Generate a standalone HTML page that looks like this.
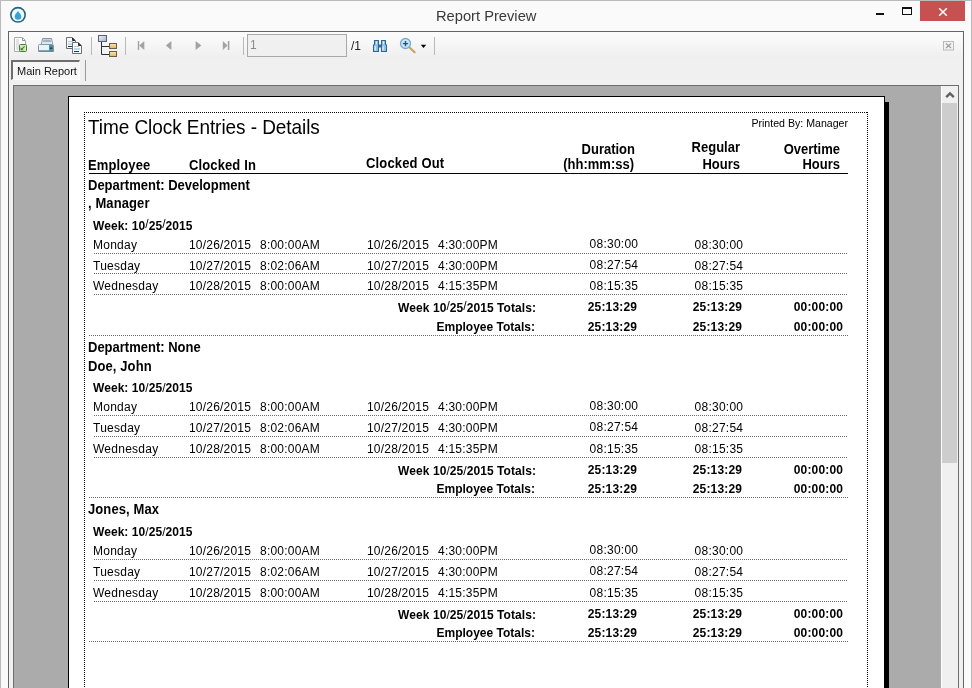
<!DOCTYPE html>
<html><head><meta charset="utf-8"><style>
html,body{margin:0;padding:0;}
body{width:972px;height:688px;overflow:hidden;position:relative;-webkit-font-smoothing:antialiased;background:#fafafa;font-family:"Liberation Sans",sans-serif;}
.t{position:absolute;white-space:pre;line-height:1;}
#frame{position:absolute;left:0;top:0;width:972px;height:688px;box-sizing:border-box;border:1px solid #bababa;border-bottom:none;}
#panel{position:absolute;left:8px;top:31px;width:956px;height:700px;box-sizing:border-box;border:1px solid #646464;background:#f0f0f0;}
#tb{position:absolute;left:9px;top:32px;width:954px;height:27px;background:linear-gradient(#fcfcfc,#f7f7f7 40%,#eeeeee);}
#view{position:absolute;left:13px;top:85px;width:946px;height:700px;box-sizing:border-box;border:1px solid #6e6e6e;border-right:1px solid #6e6e6e;background:#ababab;overflow:hidden;}
</style></head><body>
<div id="root" style="position:absolute;left:0;top:0;width:972px;height:688px;overflow:hidden;will-change:transform;">
<div id="frame"></div>
<div id="panel"></div>
<div id="tb"></div>
<div id="view"></div>
<div id="report">
<div style="position:absolute;left:68px;top:96px;width:817px;height:600px;background:#fff;border:1px solid #000;box-sizing:border-box;"></div>
<div style="position:absolute;left:885px;top:102px;width:4px;height:600px;background:#000;"></div>
<div style="position:absolute;left:84px;top:112px;width:784px;height:1px;background:repeating-linear-gradient(90deg,#000 0 1px,transparent 1px 2px);"></div>
<div style="position:absolute;left:84px;top:112px;width:1px;height:600px;background:repeating-linear-gradient(180deg,#000 0 1px,transparent 1px 2px);"></div>
<div style="position:absolute;left:867px;top:112px;width:1px;height:600px;background:repeating-linear-gradient(180deg,#000 0 1px,transparent 1px 2px);"></div>
<div class="t" style="left:88px;top:118px;font-size:19px;color:#000;transform:scaleY(1.06);transform-origin:0 16px;letter-spacing:-0.07px;">Time Clock Entries - Details</div>
<div class="t" style="right:124px;top:118px;font-size:10.6px;color:#000;text-align:right;">Printed By: Manager</div>
<div class="t" style="left:88px;top:159px;font-size:13px;font-weight:bold;color:#000;transform:scaleY(1.08);transform-origin:0 11px;letter-spacing:0.12px;">Employee</div>
<div class="t" style="left:189px;top:159px;font-size:13px;font-weight:bold;color:#000;transform:scaleY(1.08);transform-origin:0 11px;letter-spacing:0.12px;">Clocked In</div>
<div class="t" style="left:366px;top:157px;font-size:13px;font-weight:bold;color:#000;transform:scaleY(1.08);transform-origin:0 11px;letter-spacing:0.15px;">Clocked Out</div>
<div class="t" style="right:337px;top:143px;font-size:13px;font-weight:bold;color:#000;text-align:right;transform:scaleY(1.08);transform-origin:0 11px;">Duration</div>
<div class="t" style="right:338px;top:158px;font-size:13px;font-weight:bold;color:#000;text-align:right;transform:scaleY(1.08);transform-origin:0 11px;">(hh:mm:ss)</div>
<div class="t" style="right:232px;top:141px;font-size:13px;font-weight:bold;color:#000;text-align:right;transform:scaleY(1.08);transform-origin:0 11px;">Regular</div>
<div class="t" style="right:232px;top:158px;font-size:13px;font-weight:bold;color:#000;text-align:right;transform:scaleY(1.08);transform-origin:0 11px;">Hours</div>
<div class="t" style="right:132px;top:143px;font-size:13px;font-weight:bold;color:#000;text-align:right;transform:scaleY(1.08);transform-origin:0 11px;">Overtime</div>
<div class="t" style="right:132px;top:158px;font-size:13px;font-weight:bold;color:#000;text-align:right;transform:scaleY(1.08);transform-origin:0 11px;">Hours</div>
<div style="position:absolute;left:89px;top:173px;width:759px;height:1px;background:#000;"></div>
<div class="t" style="left:88px;top:179px;font-size:13px;font-weight:bold;color:#000;transform:scaleY(1.08);transform-origin:0 11px;">Department: Development</div>
<div class="t" style="left:88px;top:197px;font-size:13px;font-weight:bold;color:#000;transform:scaleY(1.08);transform-origin:0 11px;letter-spacing:0.1px;">, Manager</div>
<div class="t" style="left:93px;top:220px;font-size:12px;font-weight:bold;color:#000;letter-spacing:0.06px;">Week: 10<span style="font-weight:normal;position:relative;top:-2px">/</span>25<span style="font-weight:normal;position:relative;top:-2px">/</span>2015</div>
<div class="t" style="left:93px;top:239px;font-size:12px;color:#000;letter-spacing:0.25px;">Monday</div>
<div class="t" style="left:189px;top:239px;font-size:12px;color:#000;letter-spacing:0.2px;">10/26/2015</div>
<div class="t" style="left:260px;top:239px;font-size:12px;color:#000;letter-spacing:0.22px;">8:00:00AM</div>
<div class="t" style="left:367px;top:239px;font-size:12px;color:#000;letter-spacing:0.2px;">10/26/2015</div>
<div class="t" style="left:438px;top:239px;font-size:12px;color:#000;letter-spacing:0.22px;">4:30:00PM</div>
<div class="t" style="right:334px;top:238px;font-size:12px;color:#000;text-align:right;letter-spacing:0.25px;margin-right:-0.25px;">08:30:00</div>
<div class="t" style="right:229px;top:239px;font-size:12px;color:#000;text-align:right;letter-spacing:0.25px;margin-right:-0.25px;">08:30:00</div>
<div style="position:absolute;left:94px;top:253px;width:754px;height:1px;background:repeating-linear-gradient(90deg,#6a6a6a 0 1px,transparent 1px 2px);"></div>
<div class="t" style="left:93px;top:260px;font-size:12px;color:#000;letter-spacing:0.25px;">Tuesday</div>
<div class="t" style="left:189px;top:260px;font-size:12px;color:#000;letter-spacing:0.2px;">10/27/2015</div>
<div class="t" style="left:260px;top:260px;font-size:12px;color:#000;letter-spacing:0.22px;">8:02:06AM</div>
<div class="t" style="left:367px;top:260px;font-size:12px;color:#000;letter-spacing:0.2px;">10/27/2015</div>
<div class="t" style="left:438px;top:260px;font-size:12px;color:#000;letter-spacing:0.22px;">4:30:00PM</div>
<div class="t" style="right:334px;top:259px;font-size:12px;color:#000;text-align:right;letter-spacing:0.25px;margin-right:-0.25px;">08:27:54</div>
<div class="t" style="right:229px;top:260px;font-size:12px;color:#000;text-align:right;letter-spacing:0.25px;margin-right:-0.25px;">08:27:54</div>
<div style="position:absolute;left:94px;top:273px;width:754px;height:1px;background:repeating-linear-gradient(90deg,#6a6a6a 0 1px,transparent 1px 2px);"></div>
<div class="t" style="left:93px;top:280px;font-size:12px;color:#000;letter-spacing:0.25px;">Wednesday</div>
<div class="t" style="left:189px;top:280px;font-size:12px;color:#000;letter-spacing:0.2px;">10/28/2015</div>
<div class="t" style="left:260px;top:280px;font-size:12px;color:#000;letter-spacing:0.22px;">8:00:00AM</div>
<div class="t" style="left:367px;top:280px;font-size:12px;color:#000;letter-spacing:0.2px;">10/28/2015</div>
<div class="t" style="left:438px;top:280px;font-size:12px;color:#000;letter-spacing:0.22px;">4:15:35PM</div>
<div class="t" style="right:334px;top:280px;font-size:12px;color:#000;text-align:right;letter-spacing:0.25px;margin-right:-0.25px;">08:15:35</div>
<div class="t" style="right:229px;top:280px;font-size:12px;color:#000;text-align:right;letter-spacing:0.25px;margin-right:-0.25px;">08:15:35</div>
<div style="position:absolute;left:94px;top:294px;width:754px;height:1px;background:repeating-linear-gradient(90deg,#6a6a6a 0 1px,transparent 1px 2px);"></div>
<div class="t" style="right:436px;top:302px;font-size:12px;font-weight:bold;color:#000;text-align:right;letter-spacing:0.07px;margin-right:-0.07px;">Week 10<span style="font-weight:normal;position:relative;top:-2px">/</span>25<span style="font-weight:normal;position:relative;top:-2px">/</span>2015 Totals:</div>
<div class="t" style="right:335px;top:301px;font-size:12px;font-weight:bold;color:#000;text-align:right;letter-spacing:0.17px;margin-right:-0.17px;">25:13:29</div>
<div class="t" style="right:230px;top:301px;font-size:12px;font-weight:bold;color:#000;text-align:right;letter-spacing:0.17px;margin-right:-0.17px;">25:13:29</div>
<div class="t" style="right:129px;top:301px;font-size:12px;font-weight:bold;color:#000;text-align:right;letter-spacing:0.17px;margin-right:-0.17px;">00:00:00</div>
<div class="t" style="right:437px;top:321px;font-size:12px;font-weight:bold;color:#000;text-align:right;">Employee Totals:</div>
<div class="t" style="right:335px;top:321px;font-size:12px;font-weight:bold;color:#000;text-align:right;letter-spacing:0.17px;margin-right:-0.17px;">25:13:29</div>
<div class="t" style="right:230px;top:321px;font-size:12px;font-weight:bold;color:#000;text-align:right;letter-spacing:0.17px;margin-right:-0.17px;">25:13:29</div>
<div class="t" style="right:129px;top:321px;font-size:12px;font-weight:bold;color:#000;text-align:right;letter-spacing:0.17px;margin-right:-0.17px;">00:00:00</div>
<div style="position:absolute;left:89px;top:335px;width:759px;height:1px;background:repeating-linear-gradient(90deg,#6a6a6a 0 1px,transparent 1px 2px);"></div>
<div class="t" style="left:88px;top:341px;font-size:13px;font-weight:bold;color:#000;transform:scaleY(1.08);transform-origin:0 11px;">Department: None</div>
<div class="t" style="left:88px;top:360px;font-size:13px;font-weight:bold;color:#000;transform:scaleY(1.08);transform-origin:0 11px;letter-spacing:0.1px;">Doe, John</div>
<div class="t" style="left:93px;top:382px;font-size:12px;font-weight:bold;color:#000;letter-spacing:0.06px;">Week: 10<span style="font-weight:normal;position:relative;top:0px">/</span>25<span style="font-weight:normal;position:relative;top:0px">/</span>2015</div>
<div class="t" style="left:93px;top:401px;font-size:12px;color:#000;letter-spacing:0.25px;">Monday</div>
<div class="t" style="left:189px;top:401px;font-size:12px;color:#000;letter-spacing:0.2px;">10/26/2015</div>
<div class="t" style="left:260px;top:401px;font-size:12px;color:#000;letter-spacing:0.22px;">8:00:00AM</div>
<div class="t" style="left:367px;top:401px;font-size:12px;color:#000;letter-spacing:0.2px;">10/26/2015</div>
<div class="t" style="left:438px;top:401px;font-size:12px;color:#000;letter-spacing:0.22px;">4:30:00PM</div>
<div class="t" style="right:334px;top:400px;font-size:12px;color:#000;text-align:right;letter-spacing:0.25px;margin-right:-0.25px;">08:30:00</div>
<div class="t" style="right:229px;top:401px;font-size:12px;color:#000;text-align:right;letter-spacing:0.25px;margin-right:-0.25px;">08:30:00</div>
<div style="position:absolute;left:94px;top:415px;width:754px;height:1px;background:repeating-linear-gradient(90deg,#6a6a6a 0 1px,transparent 1px 2px);"></div>
<div class="t" style="left:93px;top:422px;font-size:12px;color:#000;letter-spacing:0.25px;">Tuesday</div>
<div class="t" style="left:189px;top:422px;font-size:12px;color:#000;letter-spacing:0.2px;">10/27/2015</div>
<div class="t" style="left:260px;top:422px;font-size:12px;color:#000;letter-spacing:0.22px;">8:02:06AM</div>
<div class="t" style="left:367px;top:422px;font-size:12px;color:#000;letter-spacing:0.2px;">10/27/2015</div>
<div class="t" style="left:438px;top:422px;font-size:12px;color:#000;letter-spacing:0.22px;">4:30:00PM</div>
<div class="t" style="right:334px;top:421px;font-size:12px;color:#000;text-align:right;letter-spacing:0.25px;margin-right:-0.25px;">08:27:54</div>
<div class="t" style="right:229px;top:422px;font-size:12px;color:#000;text-align:right;letter-spacing:0.25px;margin-right:-0.25px;">08:27:54</div>
<div style="position:absolute;left:94px;top:436px;width:754px;height:1px;background:repeating-linear-gradient(90deg,#6a6a6a 0 1px,transparent 1px 2px);"></div>
<div class="t" style="left:93px;top:443px;font-size:12px;color:#000;letter-spacing:0.25px;">Wednesday</div>
<div class="t" style="left:189px;top:443px;font-size:12px;color:#000;letter-spacing:0.2px;">10/28/2015</div>
<div class="t" style="left:260px;top:443px;font-size:12px;color:#000;letter-spacing:0.22px;">8:00:00AM</div>
<div class="t" style="left:367px;top:443px;font-size:12px;color:#000;letter-spacing:0.2px;">10/28/2015</div>
<div class="t" style="left:438px;top:443px;font-size:12px;color:#000;letter-spacing:0.22px;">4:15:35PM</div>
<div class="t" style="right:334px;top:443px;font-size:12px;color:#000;text-align:right;letter-spacing:0.25px;margin-right:-0.25px;">08:15:35</div>
<div class="t" style="right:229px;top:443px;font-size:12px;color:#000;text-align:right;letter-spacing:0.25px;margin-right:-0.25px;">08:15:35</div>
<div style="position:absolute;left:94px;top:457px;width:754px;height:1px;background:repeating-linear-gradient(90deg,#6a6a6a 0 1px,transparent 1px 2px);"></div>
<div class="t" style="right:436px;top:465px;font-size:12px;font-weight:bold;color:#000;text-align:right;letter-spacing:0.07px;margin-right:-0.07px;">Week 10<span style="font-weight:normal;position:relative;top:0px">/</span>25<span style="font-weight:normal;position:relative;top:0px">/</span>2015 Totals:</div>
<div class="t" style="right:335px;top:464px;font-size:12px;font-weight:bold;color:#000;text-align:right;letter-spacing:0.17px;margin-right:-0.17px;">25:13:29</div>
<div class="t" style="right:230px;top:464px;font-size:12px;font-weight:bold;color:#000;text-align:right;letter-spacing:0.17px;margin-right:-0.17px;">25:13:29</div>
<div class="t" style="right:129px;top:464px;font-size:12px;font-weight:bold;color:#000;text-align:right;letter-spacing:0.17px;margin-right:-0.17px;">00:00:00</div>
<div class="t" style="right:437px;top:483px;font-size:12px;font-weight:bold;color:#000;text-align:right;">Employee Totals:</div>
<div class="t" style="right:335px;top:483px;font-size:12px;font-weight:bold;color:#000;text-align:right;letter-spacing:0.17px;margin-right:-0.17px;">25:13:29</div>
<div class="t" style="right:230px;top:483px;font-size:12px;font-weight:bold;color:#000;text-align:right;letter-spacing:0.17px;margin-right:-0.17px;">25:13:29</div>
<div class="t" style="right:129px;top:483px;font-size:12px;font-weight:bold;color:#000;text-align:right;letter-spacing:0.17px;margin-right:-0.17px;">00:00:00</div>
<div style="position:absolute;left:89px;top:497px;width:759px;height:1px;background:repeating-linear-gradient(90deg,#6a6a6a 0 1px,transparent 1px 2px);"></div>
<div class="t" style="left:88px;top:503px;font-size:13px;font-weight:bold;color:#000;transform:scaleY(1.08);transform-origin:0 11px;letter-spacing:0.1px;">Jones, Max</div>
<div class="t" style="left:93px;top:526px;font-size:12px;font-weight:bold;color:#000;letter-spacing:0.06px;">Week: 10<span style="font-weight:normal;position:relative;top:0px">/</span>25<span style="font-weight:normal;position:relative;top:0px">/</span>2015</div>
<div class="t" style="left:93px;top:545px;font-size:12px;color:#000;letter-spacing:0.25px;">Monday</div>
<div class="t" style="left:189px;top:545px;font-size:12px;color:#000;letter-spacing:0.2px;">10/26/2015</div>
<div class="t" style="left:260px;top:545px;font-size:12px;color:#000;letter-spacing:0.22px;">8:00:00AM</div>
<div class="t" style="left:367px;top:545px;font-size:12px;color:#000;letter-spacing:0.2px;">10/26/2015</div>
<div class="t" style="left:438px;top:545px;font-size:12px;color:#000;letter-spacing:0.22px;">4:30:00PM</div>
<div class="t" style="right:334px;top:544px;font-size:12px;color:#000;text-align:right;letter-spacing:0.25px;margin-right:-0.25px;">08:30:00</div>
<div class="t" style="right:229px;top:545px;font-size:12px;color:#000;text-align:right;letter-spacing:0.25px;margin-right:-0.25px;">08:30:00</div>
<div style="position:absolute;left:94px;top:559px;width:754px;height:1px;background:repeating-linear-gradient(90deg,#6a6a6a 0 1px,transparent 1px 2px);"></div>
<div class="t" style="left:93px;top:566px;font-size:12px;color:#000;letter-spacing:0.25px;">Tuesday</div>
<div class="t" style="left:189px;top:566px;font-size:12px;color:#000;letter-spacing:0.2px;">10/27/2015</div>
<div class="t" style="left:260px;top:566px;font-size:12px;color:#000;letter-spacing:0.22px;">8:02:06AM</div>
<div class="t" style="left:367px;top:566px;font-size:12px;color:#000;letter-spacing:0.2px;">10/27/2015</div>
<div class="t" style="left:438px;top:566px;font-size:12px;color:#000;letter-spacing:0.22px;">4:30:00PM</div>
<div class="t" style="right:334px;top:565px;font-size:12px;color:#000;text-align:right;letter-spacing:0.25px;margin-right:-0.25px;">08:27:54</div>
<div class="t" style="right:229px;top:566px;font-size:12px;color:#000;text-align:right;letter-spacing:0.25px;margin-right:-0.25px;">08:27:54</div>
<div style="position:absolute;left:94px;top:580px;width:754px;height:1px;background:repeating-linear-gradient(90deg,#6a6a6a 0 1px,transparent 1px 2px);"></div>
<div class="t" style="left:93px;top:587px;font-size:12px;color:#000;letter-spacing:0.25px;">Wednesday</div>
<div class="t" style="left:189px;top:587px;font-size:12px;color:#000;letter-spacing:0.2px;">10/28/2015</div>
<div class="t" style="left:260px;top:587px;font-size:12px;color:#000;letter-spacing:0.22px;">8:00:00AM</div>
<div class="t" style="left:367px;top:587px;font-size:12px;color:#000;letter-spacing:0.2px;">10/28/2015</div>
<div class="t" style="left:438px;top:587px;font-size:12px;color:#000;letter-spacing:0.22px;">4:15:35PM</div>
<div class="t" style="right:334px;top:587px;font-size:12px;color:#000;text-align:right;letter-spacing:0.25px;margin-right:-0.25px;">08:15:35</div>
<div class="t" style="right:229px;top:587px;font-size:12px;color:#000;text-align:right;letter-spacing:0.25px;margin-right:-0.25px;">08:15:35</div>
<div style="position:absolute;left:94px;top:601px;width:754px;height:1px;background:repeating-linear-gradient(90deg,#6a6a6a 0 1px,transparent 1px 2px);"></div>
<div class="t" style="right:436px;top:609px;font-size:12px;font-weight:bold;color:#000;text-align:right;letter-spacing:0.07px;margin-right:-0.07px;">Week 10<span style="font-weight:normal;position:relative;top:0px">/</span>25<span style="font-weight:normal;position:relative;top:0px">/</span>2015 Totals:</div>
<div class="t" style="right:335px;top:608px;font-size:12px;font-weight:bold;color:#000;text-align:right;letter-spacing:0.17px;margin-right:-0.17px;">25:13:29</div>
<div class="t" style="right:230px;top:608px;font-size:12px;font-weight:bold;color:#000;text-align:right;letter-spacing:0.17px;margin-right:-0.17px;">25:13:29</div>
<div class="t" style="right:129px;top:608px;font-size:12px;font-weight:bold;color:#000;text-align:right;letter-spacing:0.17px;margin-right:-0.17px;">00:00:00</div>
<div class="t" style="right:437px;top:627px;font-size:12px;font-weight:bold;color:#000;text-align:right;">Employee Totals:</div>
<div class="t" style="right:335px;top:627px;font-size:12px;font-weight:bold;color:#000;text-align:right;letter-spacing:0.17px;margin-right:-0.17px;">25:13:29</div>
<div class="t" style="right:230px;top:627px;font-size:12px;font-weight:bold;color:#000;text-align:right;letter-spacing:0.17px;margin-right:-0.17px;">25:13:29</div>
<div class="t" style="right:129px;top:627px;font-size:12px;font-weight:bold;color:#000;text-align:right;letter-spacing:0.17px;margin-right:-0.17px;">00:00:00</div>
<div style="position:absolute;left:89px;top:641px;width:759px;height:1px;background:repeating-linear-gradient(90deg,#6a6a6a 0 1px,transparent 1px 2px);"></div>
</div>
<!-- scrollbar -->
<div style="position:absolute;left:941px;top:86px;width:1px;height:610px;background:#fff;"></div>
<div style="position:absolute;left:942px;top:86px;width:16px;height:610px;background:#f0f0f0;"></div>
<div style="position:absolute;left:942px;top:103px;width:15px;height:360px;background:#cdcdcd;"></div>
<svg style="position:absolute;left:942px;top:86px" width="16" height="17"><path d="M4.2 11.2 L8 7.4 L11.8 11.2" stroke="#606060" stroke-width="2.4" fill="none"/></svg>
<!-- title bar icon -->
<svg style="position:absolute;left:8px;top:5px" width="22" height="20" viewBox="8 5 22 20">
  <circle cx="18" cy="14.85" r="7.2" fill="#eafcff" stroke="#2a5f7a" stroke-width="1.6"/>
  <path d="M18 11 C17 12.6 14.7 14.4 14.7 16.5 A3.3 3.3 0 0 0 21.3 16.5 C21.3 14.4 19 12.6 18 11 Z" fill="#37a2da"/>
</svg>
<div class="t" style="left:436px;top:9px;font-size:14.7px;color:#3a3a3a;">Report Preview</div>
<!-- min / max / close -->
<div style="position:absolute;left:876px;top:13px;width:8px;height:2px;background:#111;"></div>
<div style="position:absolute;left:902px;top:7px;width:10px;height:8px;box-sizing:border-box;border:1px solid #111;border-top:2px solid #111;"></div>
<div style="position:absolute;left:920px;top:1px;width:45px;height:20px;background:#c75050;"></div>
<svg style="position:absolute;left:920px;top:1px" width="45" height="20"><path d="M19.2 7.3 L26.8 14.7 M26.8 7.3 L19.2 14.7" stroke="#fff" stroke-width="1.5"/></svg>

<!-- toolbar icons -->
<svg style="position:absolute;left:0;top:30px" width="440" height="30" viewBox="0 30 440 30">
  <!-- export -->
  <path d="M14.5 37.5 H22.5 L25.5 40.5 V51.5 H14.5 Z" fill="#fbfbfb" stroke="#ababab"/>
  <rect x="16" y="39" width="3" height="11" fill="#e3e3e3"/>
  <path d="M22.5 38 V40.5 H25" fill="none" stroke="#8f8f8f"/>
  <rect x="19.5" y="44.5" width="7" height="7" rx="1" fill="#cdeeb5" stroke="#4d7a3c"/>
  <path d="M24.6 46.3 L21.6 49.3" stroke="#4d7a3c" stroke-width="1.2"/>
  <path d="M20.6 47.2 V50.3 H23.7 Z" fill="#4d7a3c"/>
  <!-- printer -->
  <path d="M41.3 44.5 L42.6 38.5 H51.6 L52.6 44.5" fill="#eef4f9" stroke="#8b949b"/>
  <path d="M43.4 39.4 H50.7 L51 42 H43 Z" fill="#9fb2c6"/>
  <path d="M43 42 H51 L51.3 44 H42.7 Z" fill="#dde7f0"/>
  <path d="M38.5 45.5 Q38.5 44.5 39.5 44.5 H52.5 Q53.5 44.5 53.5 45.5 V51.5 H38.5 Z" fill="#e4f5fd" stroke="#8a9aa4"/>
  <path d="M49 45 H53 V51 H49 Z" fill="#4d8fae"/>
  <rect x="50" y="47.5" width="2.5" height="1.5" fill="#1c4a62"/>
  <rect x="39" y="50.3" width="14.5" height="1.4" fill="#6a8192"/>
  <!-- copy -->
  <defs>
    <linearGradient id="gb" x1="0" y1="0" x2="1" y2="1"><stop offset="0" stop-color="#eef4ff"/><stop offset="1" stop-color="#9fb3d3"/></linearGradient>
    <linearGradient id="go" x1="0" y1="0" x2="0" y2="1"><stop offset="0" stop-color="#fbe7ae"/><stop offset="1" stop-color="#e2b45c"/></linearGradient>
  </defs>
  <path d="M66.5 37.5 H72.5 L75.5 40.5 V48.5 H66.5 Z" fill="#f6fbfe" stroke="#707070"/>
  <path d="M72.5 38 V40.5 H75" fill="#1e2a30" stroke="#1e2a30" stroke-width="1"/>
  <rect x="68" y="41" width="5" height="1" fill="#c4c4c4"/>
  <rect x="68" y="43" width="6" height="2" fill="#b7def2"/>
  <rect x="68" y="46" width="5" height="1" fill="#1d3b4a"/>
  <path d="M72.5 42.5 H78.5 L81.5 45.5 V53.5 H72.5 Z" fill="#f6fbfe" stroke="#707070"/>
  <path d="M78.5 43 V45.5 H81" fill="#1e2a30" stroke="#1e2a30" stroke-width="1"/>
  <rect x="74" y="46" width="5" height="1" fill="#c4c4c4"/>
  <rect x="74" y="48" width="6" height="2" fill="#b7def2"/>
  <rect x="74" y="51" width="5" height="1" fill="#1d3b4a"/>
  <!-- sep -->
  <rect x="91" y="37" width="1" height="18" fill="#b9b9b9"/>
  <!-- tree -->
  <rect x="98.5" y="35.5" width="8" height="6" fill="url(#gb)" stroke="#5a5f68"/>
  <path d="M101.5 42 V54.5 H109 M101.5 46.5 H109" fill="none" stroke="#253038"/>
  <rect x="109.5" y="43.5" width="7" height="5" fill="url(#go)" stroke="#6a5d45"/>
  <rect x="109.5" y="51.5" width="7" height="5" fill="url(#go)" stroke="#6a5d45"/>
  <!-- sep -->
  <rect x="125" y="37" width="1" height="18" fill="#b9b9b9"/>
  <!-- nav -->
  <rect x="137.8" y="41" width="1.4" height="9" fill="#a3a3a3"/>
  <path d="M139.2 45.5 L144.3 41 V50 Z" fill="#a3a3a3"/>
  <path d="M165.8 45.5 L171.4 41 V50 Z" fill="#a3a3a3"/>
  <path d="M201.4 45.5 L195.6 41 V50 Z" fill="#a3a3a3"/>
  <path d="M227.6 45.5 L222.8 41 V50 Z" fill="#a3a3a3"/>
  <rect x="227.8" y="41" width="1.6" height="9" fill="#a3a3a3"/>
  <!-- sep -->
  <rect x="243" y="37" width="1" height="18" fill="#b9b9b9"/>
  <!-- page box -->
  <rect x="247.5" y="34.5" width="99" height="22" fill="#f0f0f0" stroke="#a9a9a9"/>
  <!-- binoculars -->
  <path d="M374.5 40.5 H378.5 V51.5 H373.5 V45.2 L374.5 44.2 Z" fill="#8cc4e8" stroke="#34648d" stroke-width="1.05"/>
  <path d="M381.5 40.5 H385.5 V44.2 L386.5 45.2 V51.5 H381.5 Z" fill="#8cc4e8" stroke="#34648d" stroke-width="1.05"/>
  <rect x="379" y="44.5" width="2" height="3" fill="#3d6c96"/>
  <path d="M376.5 41.5 V43.8 M383.5 41.5 V43.8" stroke="#dff4ff" stroke-width="1"/>
  <path d="M375.2 46.2 V50.6 M383 46.2 V50.6" stroke="#e6f8ff" stroke-width="1.1"/>
  <!-- zoom -->
  <path d="M409.8 47.8 L414.6 52.2" stroke="#c8a264" stroke-width="2.2" stroke-linecap="round"/>
  <circle cx="405.5" cy="43.5" r="5" fill="#c8e6f8" stroke="#79a9cc" stroke-width="1.3"/>
  <path d="M402.9 43.6 H408.1 M405.5 41 V46.2" stroke="#22527a" stroke-width="1.4"/>
  <path d="M420.8 44.8 H426.2 L423.5 48 Z" fill="#000"/>
  <!-- sep -->
  <rect x="434" y="37" width="1" height="18" fill="#b9b9b9"/>
</svg>
<div class="t" style="left:250px;top:39px;font-size:12px;color:#8a8a8a;">1</div>
<div class="t" style="left:351px;top:40px;font-size:12px;color:#222;">/1</div>
<!-- close doc -->
<svg style="position:absolute;left:940px;top:38px" width="16" height="16" viewBox="940 38 16 16">
  <rect x="943.5" y="41.5" width="10" height="8.5" fill="#f2f2f2" stroke="#b9b9b9"/>
  <path d="M946 43.5 L951 48 M951 43.5 L946 48" stroke="#a0a0a0" stroke-width="1.3"/>
</svg>
<!-- tab -->
<div style="position:absolute;left:11px;top:60px;width:69px;height:20px;box-sizing:border-box;border-top:2px solid #6e6e6e;border-left:2px solid #6e6e6e;border-bottom:1px solid #fff;border-right:1px solid #fcfcfc;background:repeating-conic-gradient(#fdfdfd 0 25%,#f1f1f1 0 50%) 0 0/2px 2px;"></div>
<div class="t" style="left:17px;top:66px;font-size:11px;color:#111;">Main Report</div>
<div style="position:absolute;left:85px;top:60px;width:1px;height:21px;background:#9a9a9a;"></div>

</div>
</body></html>
